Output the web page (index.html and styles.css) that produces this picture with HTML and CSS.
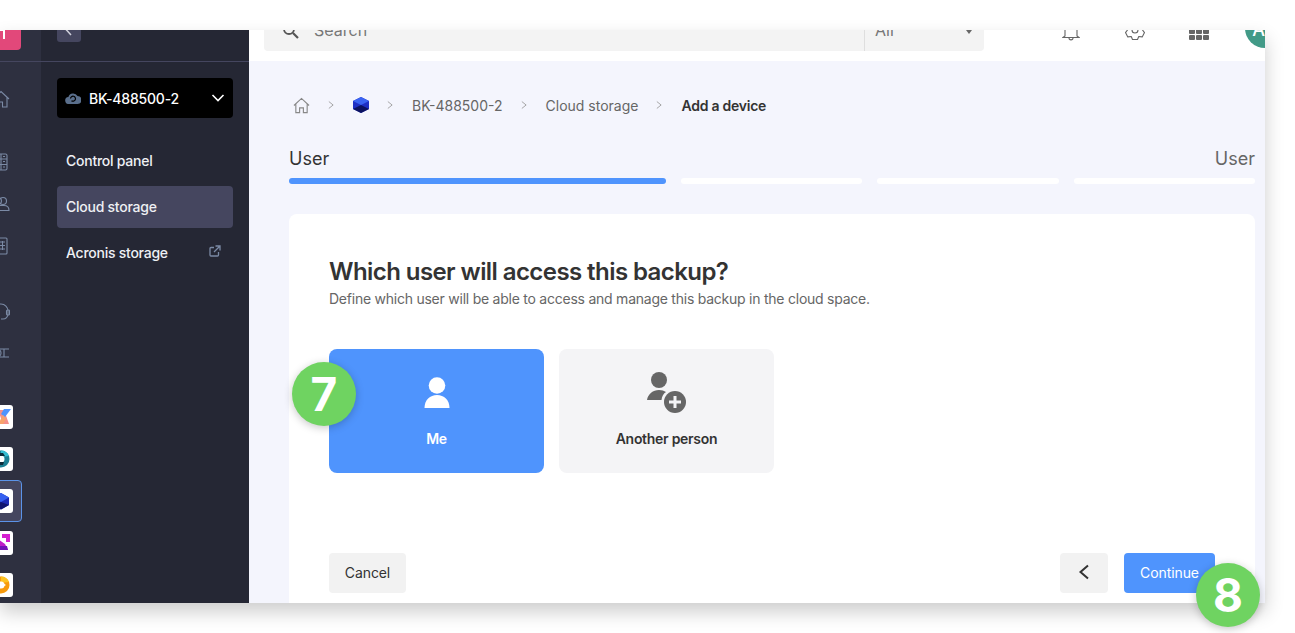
FILE: index.html
```html
<!DOCTYPE html>
<html lang="en">

<head>
    <meta charset="UTF-8">
    <title>Add a device</title>
    <link rel="stylesheet" href="styles.css">
</head>

<body>
    <div class="window">
        <!-- Left rail with product icons -->
        <aside class="rail">
            <div class="rail-top">
                <div class="add-btn">
                    <svg width="42" height="42" viewBox="0 0 42 42"><path d="M15 20h10M24 16v13" stroke="#fff" stroke-width="2" fill="none"/></svg>
                </div>
            </div>
            <div class="rail-group rail-group-home">
                <div class="rail-item">
                    <svg class="rail-icon" viewBox="0 0 18 18"><path d="M1 9 9 1.500 17 9M3 7.500V17h4.500v-5h3v5H15V7.500"/></svg>
                </div>
            </div>
            <div class="rail-group rail-group-mid">
                <div class="rail-item">
                    <svg class="rail-icon" viewBox="0 0 18 18"><rect x="1" y="1" width="14" height="16" rx="1.500"/><path d="M1 6h14M1 11.500h14M9 1v16M11 3.500h2M11 8.500h2M11 14h2"/></svg>
                </div>
                <div class="rail-item">
                    <svg class="rail-icon" viewBox="0 0 18 18"><circle cx="6" cy="6" r="3.500"/><circle cx="11" cy="6" r="3.500"/><path d="M1 15.500c0-3.500 2-5 5-5h6c3 0 5 1.500 5 5z"/></svg>
                </div>
                <div class="rail-item">
                    <svg class="rail-icon" viewBox="0 0 18 18"><rect x="0.500" y="1" width="14.500" height="16" rx="1"/><path d="M4 5h9M4 8.500h9M4 12h9M7.500 4v9M10.500 4v9"/></svg>
                </div>
            </div>
            <div class="rail-group rail-group-support">
                <div class="rail-item">
                    <svg class="rail-icon" viewBox="0 0 18 18"><path d="M2 9a7 7 0 0 1 14 0v3a5 5 0 0 1-5 5H9"/><rect x="14.500" y="8" width="3" height="5" rx="1"/></svg>
                </div>
                <div class="rail-item">
                    <svg class="rail-icon" viewBox="0 0 18 18"><circle cx="5" cy="9" r="4"/><path d="M8 5h9M8 13h9M12 5v8M2 15l4-3"/></svg>
                </div>
            </div>
            <div class="rail-group">
                <div class="rail-item">
                    <div class="tile">
                        <svg width="24" height="24" viewBox="0 0 24 24"><path d="M9 5h6l5 14h-6z" fill="#f5908a"/><path d="M15 4h7l-6 8-4-3z" fill="#4f94fd"/><path d="M9 19l5-9 3 4-3 5z" fill="#f7a36b"/></svg>
                    </div>
                </div>
                <div class="rail-item">
                    <div class="tile">
                        <svg width="24" height="24" viewBox="0 0 24 24"><circle cx="12" cy="12" r="8.500" fill="#1c7f93"/><path d="M12 3.500a8.500 8.500 0 0 1 8 5.500l-8 1z" fill="#35bcd0"/><circle cx="12" cy="12" r="3.500" fill="#fff"/><path d="M9 6h5l2 3h-7zM9 15h6l-1 3H9z" fill="#0e2b3a"/></svg>
                    </div>
                </div>
                <div class="rail-item rail-item-active">
                    <div class="tile">
                        <svg width="24" height="24" viewBox="0 0 24 24"><path d="M12 4 20 8.500V16l-8 4.500L4 16V8.500z" fill="#1d2ab5"/><path d="M12 4 20 8.500 12 13 4 8.500z" fill="#3560f0"/><path d="M12 13 20 16l-8 4.500L4 16z" fill="#10146e"/></svg>
                    </div>
                </div>
                <div class="rail-item">
                    <div class="tile">
                        <svg width="24" height="24" viewBox="0 0 24 24"><path d="M13 3h8v8h-4V7h-4z" fill="#d41fd0"/><path d="M9 8l7 5 3 6H9z" fill="#c01cc8"/><path d="M9 15h9l1 4H9z" fill="#7312b8"/></svg>
                    </div>
                </div>
                <div class="rail-item">
                    <div class="tile">
                        <svg width="24" height="24" viewBox="0 0 24 24"><circle cx="12" cy="12" r="8.500" fill="#f79a0c"/><path d="M12 3.500a8.500 8.500 0 0 1 8 5.500l-8 1z" fill="#fdc323"/><circle cx="12" cy="12" r="3.500" fill="#fff"/><path d="M12 9l5 3-5 3z" fill="#fff"/></svg>
                    </div>
                </div>
            </div>
        </aside>

        <!-- Product sidebar -->
        <aside class="sidebar">
            <div class="sidebar-top">
                <div class="back-btn">
                    <svg width="24" height="24" viewBox="0 0 24 24"><path d="M14 7 9.500 12 14 17" stroke="#cfd0dc" stroke-width="1.500" fill="none"/></svg>
                </div>
            </div>
            <div class="sidebar-body">
                <div class="product-select">
                    <svg class="cloud-icon" width="16" height="12" viewBox="0 0 16 12"><path d="M4 12a3.500 3.500 0 0 1-.6-7A5 5 0 0 1 12.500 4 4 4 0 0 1 12.500 12z" fill="#5a6f8c"/><path d="M5.500 6.500a2.500 2.500 0 1 1 1 2.200" stroke="#000" stroke-width="1.200" fill="none"/></svg>
                    <span class="product-name">BK-488500-2</span>
                    <svg class="select-caret" width="14" height="8" viewBox="0 0 14 8"><path d="M1.500 1 7 6.500 12.500 1" stroke="#fff" stroke-width="1.600" fill="none"/></svg>
                </div>
                <nav class="side-nav">
                    <a class="side-link">Control panel</a>
                    <a class="side-link side-link-active">Cloud storage</a>
                    <a class="side-link">Acronis storage
                        <svg width="12" height="12" viewBox="0 0 12 12"><path d="M9.500 7v3a1 1 0 0 1-1 1H2a1 1 0 0 1-1-1V3.500a1 1 0 0 1 1-1h3M6.500 1H11v4.500M11 1 5 7" stroke="#7b8aa5" stroke-width="1.300" fill="none"/></svg>
                    </a>
                </nav>
            </div>
        </aside>

        <div class="content">
            <!-- Top bar -->
            <header class="topbar">
                <div class="search">
                    <svg class="search-icon" width="17" height="17" viewBox="0 0 17 17"><circle cx="7" cy="7" r="5" stroke="#555" stroke-width="1.800" fill="none"/><path d="M11 11l5 5" stroke="#555" stroke-width="2.200"/></svg>
                    <span class="search-text">Search</span>
                    <div class="search-scope">
                        <span>All</span>
                        <span class="scope-caret"></span>
                    </div>
                </div>
                <div class="top-icons">
                    <svg class="top-icon top-bell" width="18" height="20" viewBox="0 0 18 20"><path d="M3 14V8a6 6 0 0 1 12 0v6l2 1.500H1zM7 16c0 2.500 4 2.500 4 0" stroke="#666" stroke-width="1.100" fill="none"/></svg>
                    <svg class="top-icon top-gear" width="20" height="20" viewBox="0 0 20 20"><path d="M7.500 19.500h5l1.250-3 3.450.4 2.300-4.300-2-2.600 2-2.600-2.300-4.300-3.450.4-1.250-3h-5l-1.250 3-3.450-.4-2.300 4.300 2 2.600-2 2.600 2.300 4.300 3.450-.4z" stroke="#666" stroke-width="1.100" stroke-linejoin="round" fill="none"/><circle cx="10" cy="10" r="3" stroke="#666" stroke-width="1.100" fill="none"/></svg>
                    <div class="top-grid">
                        <i></i><i></i><i></i><i></i><i></i><i></i>
                    </div>
                    <div class="avatar">AC</div>
                </div>
            </header>

            <main class="main">
                <!-- Breadcrumb -->
                <div class="breadcrumb">
                    <svg class="crumb-home" width="17" height="17" viewBox="0 0 18 17"><path d="M1 8.500 9 1l8 7.500M3 7v9h4v-5h4v5h4V7" stroke="#888" stroke-width="1.200" fill="none"/></svg>
                    <svg class="crumb-sep" width="6" height="10" viewBox="0 0 7 10"><path d="M1 1l5 4-5 4" stroke="#999" fill="none"/></svg>
                    <svg class="crumb-cube" width="16" height="16" viewBox="0 0 16 16"><path d="M8 0l8 4v8l-8 4-8-4V4z" fill="#1e2fc4"/><path d="M8 0l8 4-8 4-8-4z" fill="#3a63f2"/><path d="M8 8l8 4-8 4-8-4z" fill="#0c1260"/></svg>
                    <svg class="crumb-sep" width="6" height="10" viewBox="0 0 7 10"><path d="M1 1l5 4-5 4" stroke="#999" fill="none"/></svg>
                    <span class="crumb">BK-488500-2</span>
                    <svg class="crumb-sep" width="6" height="10" viewBox="0 0 7 10"><path d="M1 1l5 4-5 4" stroke="#999" fill="none"/></svg>
                    <span class="crumb">Cloud storage</span>
                    <svg class="crumb-sep" width="6" height="10" viewBox="0 0 7 10"><path d="M1 1l5 4-5 4" stroke="#999" fill="none"/></svg>
                    <span class="crumb crumb-current">Add a device</span>
                </div>

                <!-- Steps -->
                <div class="step-labels">
                    <span class="step-label step-label-current">User</span>
                    <span class="step-label">User</span>
                </div>
                <div class="step-bars">
                    <div class="step-bar step-bar-current"></div>
                    <div class="step-bar"></div>
                    <div class="step-bar"></div>
                    <div class="step-bar"></div>
                </div>

                <!-- Card -->
                <section class="card">
                    <h1 class="card-title">Which user will access this backup?</h1>
                    <p class="card-text">Define which user will be able to access and manage this backup in the cloud space.</p>
                    <div class="choices">
                        <div class="choice choice-selected">
                            <svg class="choice-icon" width="40" height="42" viewBox="0 0 40 42"><circle cx="20" cy="13.500" r="8.300" fill="#fff"/><path d="M7.500 36c0-8 5.500-13 12.500-13s12.500 5 12.500 13z" fill="#fff"/></svg>
                            <span class="choice-label">Me</span>
                        </div>
                        <div class="choice">
                            <svg class="choice-icon" width="40" height="42" viewBox="0 0 40 42"><circle cx="12" cy="8" r="8" fill="#666"/><path d="M0 28c1-6 6-10 12-10 3 0 5 .7 7 2-3 2-4 4.500-4.500 8z" fill="#666"/><circle cx="28" cy="30" r="11" fill="#666"/><path d="M28 24v12M22 30h12" stroke="#f4f4f6" stroke-width="3"/></svg>
                            <span class="choice-label">Another person</span>
                        </div>
                    </div>
                    <div class="card-actions">
                        <button class="btn btn-grey btn-cancel">Cancel</button>
                        <div class="actions-right">
                            <button class="btn btn-grey btn-back">
                                <svg width="12" height="16" viewBox="0 0 12 16"><path d="M10 1.500 2.500 8l7.500 6.500" stroke="#333" stroke-width="2" fill="none"/></svg>
                            </button>
                            <button class="btn btn-blue">Continue</button>
                        </div>
                    </div>
                </section>
            </main>
        </div>
    </div>

    <!-- Step markers over the screenshot -->
    <div class="marker marker-7">7</div>
    <div class="marker marker-8">8</div>
</body>

</html>
```

FILE: styles.css
```css
html,
body {
    margin: 0;
    height: 100%;
    overflow: hidden;
}

body {
    position: relative;
    background-color: #fff;
    font-family: Inter, 'Liberation Sans', sans-serif;
    color: #333;
}

.window {
    display: flex;
    width: 1265px;
    height: 573px;
    margin-top: 30px;
    overflow: hidden;
    box-shadow: 0 9px 18px rgba(0, 0, 0, 0.2);
}

/* Left rail */
.rail {
    flex: none;
    width: 41px;
    background-color: #2e3040;
    overflow: hidden;
}

.rail-top {
    display: flex;
    align-items: flex-end;
    height: 31px;
    border-bottom: 1px solid #45465f;
}

.add-btn {
    flex: none;
    width: 40px;
    height: 40px;
    margin: 0 0 11px -19px;
    background-color: #e2487a;
    border-radius: 4px;
}

.add-btn svg {
    display: block;
    margin-left: -1px;
}

.rail-group {
    width: 42px;
    margin-left: -20px;
}

.rail-group-home {
    padding-top: 16px;
    margin-bottom: 21px;
}

.rail-group-mid {
    margin-bottom: 23px;
}

.rail-group-support {
    margin-bottom: 22px;
}

.rail-item {
    display: flex;
    align-items: center;
    justify-content: center;
    height: 42px;
    box-sizing: border-box;
}

.rail-item-active {
    background-color: #45465f;
    border: 1px solid #5b93e8;
    border-radius: 4px;
}

.rail-icon {
    width: 18px;
    height: 18px;
    fill: none;
    stroke: #7b8aa5;
    stroke-width: 1.100;
}

.tile {
    flex: none;
    width: 24px;
    height: 24px;
    background-color: #fff;
    border-radius: 3px;
}

.tile svg {
    display: block;
}

/* Product sidebar */
.sidebar {
    flex: none;
    width: 208px;
    background-color: #252734;
}

.sidebar-top {
    display: flex;
    align-items: flex-end;
    height: 31px;
    padding-left: 16px;
    border-bottom: 1px solid #45465f;
}

.back-btn {
    flex: none;
    width: 24px;
    height: 24px;
    margin-bottom: 19px;
    background-color: #45465f;
    border-radius: 3px;
}

.sidebar-body {
    padding: 16px 16px 0;
}

.product-select {
    display: flex;
    align-items: center;
    height: 40px;
    padding: 0 8px;
    background-color: #000;
    border-radius: 4px;
}

.cloud-icon {
    flex: none;
    margin-right: 8px;
}

.product-name {
    flex: 1;
    font-size: 14px;
    font-weight: 500;
    letter-spacing: -0.2px;
    color: #fff;
}

.select-caret {
    flex: none;
}

.side-nav {
    display: flex;
    flex-direction: column;
    gap: 4px;
    margin-top: 22px;
}

.side-link {
    display: flex;
    align-items: center;
    justify-content: space-between;
    height: 42px;
    padding: 0 12px 2px 9px;
    box-sizing: border-box;
    border-radius: 4px;
    font-size: 14px;
    font-weight: 500;
    letter-spacing: -0.25px;
    color: #eef0f4;
}

.side-link svg {
    margin-top: -3px;
}

.side-link-active {
    background-color: #45465f;
}

/* Top bar */
.content {
    flex: 1;
    min-width: 0;
    display: flex;
    flex-direction: column;
}

.topbar {
    flex: none;
    display: flex;
    align-items: flex-end;
    height: 31px;
    padding-left: 15px;
    background-color: #fff;
}

.search {
    flex: none;
    display: flex;
    align-items: center;
    width: 720px;
    height: 40px;
    margin-bottom: 10px;
    background-color: #f3f3f3;
    border-radius: 4px;
    font-size: 16px;
    color: #777;
}

.search-icon {
    margin-left: 18px;
    margin-top: -2px;
}

.search-text {
    flex: 1;
    margin: -2px 0 0 15px;
}

.search-scope {
    display: flex;
    align-items: center;
    justify-content: space-between;
    width: 120px;
    height: 100%;
    padding: 0 12px 2px 10px;
    box-sizing: border-box;
    border-left: 1px solid #dedede;
}

.scope-caret {
    width: 0;
    height: 0;
    margin-top: 4px;
    border-left: 3px solid transparent;
    border-right: 3px solid transparent;
    border-top: 4px solid #666;
}

.top-icons {
    display: flex;
    align-items: flex-end;
    flex: none;
    margin-left: 78px;
}

.top-icon {
    flex: none;
}

.top-bell {
    margin-bottom: 19px;
}

.top-gear {
    margin: 0 0 21px 45px;
}

.top-grid {
    flex: none;
    display: grid;
    grid-template-columns: repeat(3, 6px);
    gap: 1px;
    margin: 0 0 21px 44px;
}

.top-grid i {
    width: 6px;
    height: 5px;
    background-color: #666;
    border-radius: 1px;
}

.avatar {
    flex: none;
    display: flex;
    align-items: center;
    justify-content: center;
    width: 40px;
    height: 40px;
    padding-top: 3px;
    box-sizing: border-box;
    margin: 0 0 13px 36px;
    border-radius: 50%;
    background-color: #429a87;
    color: #fff;
    font-size: 18px;
    font-weight: 500;
}

/* Main area */
.main {
    flex: 1;
    min-height: 0;
    padding: 0 10px 0 40px;
    background-color: #f4f5fd;
}

.breadcrumb {
    display: flex;
    align-items: center;
    height: 20px;
    margin-top: 34px;
    padding-left: 4px;
    font-size: 14px;
    color: #666;
}

.crumb-sep {
    flex: none;
    margin: 0 19px 0 18px;
}

.crumb-home,
.crumb-cube {
    flex: none;
}

.crumb-current {
    font-weight: 600;
    letter-spacing: -0.25px;
    color: #333;
}

.step-labels {
    display: flex;
    justify-content: space-between;
    margin-top: 33px;
    font-size: 18px;
    line-height: 22px;
    color: #666;
}

.step-label-current {
    color: #333;
}

.step-bars {
    display: grid;
    grid-template-columns: 377px 1fr 1fr 1fr;
    gap: 15px;
    margin-top: 8px;
}

.step-bar {
    height: 6px;
    background-color: #fff;
    border-radius: 3px;
}

.step-bar-current {
    background-color: #4f94fd;
}

/* Card */
.card {
    height: 389px;
    margin-top: 30px;
    padding: 40px 40px 0;
    box-sizing: border-box;
    background-color: #fff;
    border-radius: 8px 8px 0 0;
}

.card-title {
    margin: 0;
    font-size: 24px;
    line-height: 36px;
    font-weight: 600;
    letter-spacing: -0.57px;
}

.card-text {
    margin: 0;
    font-size: 14px;
    line-height: 18px;
    letter-spacing: -0.24px;
    color: #666;
}

.choices {
    display: flex;
    gap: 15px;
    margin-top: 41px;
}

.choice {
    flex: none;
    display: flex;
    flex-direction: column;
    align-items: center;
    width: 215px;
    height: 124px;
    padding-top: 23px;
    box-sizing: border-box;
    background-color: #f4f4f6;
    border-radius: 8px;
    font-size: 14px;
    font-weight: 600;
    letter-spacing: -0.28px;
}

.choice-selected {
    background-color: #4f94fd;
    color: #fff;
}

.choice-icon {
    display: block;
    margin-bottom: 16px;
}

.choice-label {
    line-height: 18px;
}

.card-actions {
    display: flex;
    justify-content: space-between;
    margin-top: 80px;
}

.actions-right {
    display: flex;
    gap: 16px;
}

.btn {
    display: flex;
    align-items: center;
    justify-content: center;
    height: 40px;
    padding: 0 0 2px;
    border: none;
    border-radius: 4px;
    font-family: inherit;
    font-size: 14px;
    font-weight: 400;
    letter-spacing: -0.1px;
}

.btn-grey {
    background-color: #f2f2f2;
    color: #333;
}

.btn-cancel {
    width: 77px;
}

.btn-back {
    width: 48px;
}

.btn-blue {
    width: 91px;
    background-color: #4f94fd;
    color: #fff;
}

/* Step markers */
.marker {
    position: absolute;
    display: flex;
    align-items: center;
    justify-content: center;
    width: 64px;
    height: 64px;
    border-radius: 50%;
    background-color: #6fd361;
    box-shadow: 0 2px 8px rgba(0, 0, 0, 0.22);
    color: #fff;
    font-size: 46px;
    font-weight: 700;
}

.marker-7 {
    left: 292px;
    top: 362px;
}

.marker-8 {
    left: 1196px;
    top: 563px;
}
```
